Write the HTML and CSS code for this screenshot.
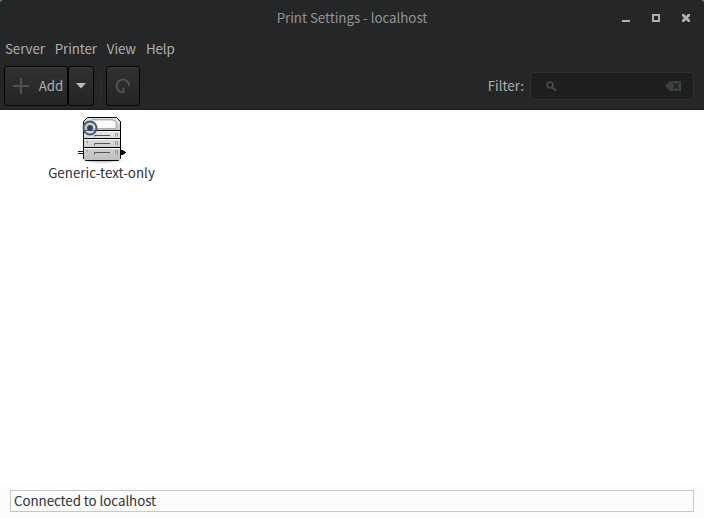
FILE: index.html
```html
<!DOCTYPE html>
<html lang="en">
<head>
<meta charset="utf-8">
<title>Print Settings - localhost</title>
<link rel="stylesheet" href="styles.css">
</head>
<body>
<div class="window">
  <header class="chrome">
    <div class="titlebar">
      <h1 class="title">Print Settings - localhost</h1>
      <div class="controls">
        <svg width="8" height="8"><path d="M0 6h8v2H0z"/></svg>
        <svg width="8" height="8"><path fill-rule="evenodd" d="M0 0h8v8H0zM2 2v4h4V2z"/></svg>
        <svg width="8" height="8"><path d="M0 0h2l2 2 2-2h2v2L6 4l2 2v2H6L4 6 2 8H0V6l2-2-2-2z"/></svg>
      </div>
    </div>
    <nav class="menu"><span>Server</span><span>Printer</span><span>View</span><span>Help</span></nav>
    <div class="toolbar">
      <button class="btn add"><svg width="16" height="16"><path d="M7 0h2v7h7v2H9v7H7V9H0V7h7z"/></svg><span>Add</span></button>
      <button class="btn drop"><svg width="10" height="6"><path d="M0 0h10L5 5.5z"/></svg></button>
      <i class="separator"></i>
      <button class="btn refresh"><svg width="16" height="16"><path d="M4.500 13.200A6.300 6.300 0 1 1 14.300 8M4 14h4.500V9.500" fill="none" stroke="#505152" stroke-width="2"/></svg></button>
      <span class="filter-label">Filter:</span>
      <div class="search">
        <svg width="11" height="11"><circle cx="4" cy="4" r="3" fill="none" stroke="#4b4c4c" stroke-width="1.7"/><path d="M6.3 6.3l3.5 3.5" stroke="#4b4c4c" stroke-width="2"/></svg>
        <svg width="16" height="10"><path d="M0 5l5-5h11v10H5z" fill="#3e4040"/><path d="M8.3 2.3l5.4 5.4m0-5.4L8.3 7.7" stroke="#1d1f20" stroke-width="1.6"/></svg>
      </div>
    </div>
  </header>
  <main class="content">
    <div class="printer">
      <svg class="printer-icon" width="48" height="48" viewBox="0 0 48 48">
        <defs>
          <linearGradient id="tray" x2="0" y2="1"><stop stop-color="#e6e6e4"/><stop offset="1" stop-color="#bfc0bd"/></linearGradient>
          <radialGradient id="shade"><stop stop-color="#000" stop-opacity=".4"/><stop offset="1" stop-color="#000" stop-opacity="0"/></radialGradient>
        </defs>
        <ellipse cx="24" cy="43.500" rx="23" ry="4.500" fill="url(#shade)"/>
        <path d="M0 35.500h6M0 37.500h6M42 35.500h5M42 37.500h5" stroke="#111" fill="none"/>
        <path d="M43 34h2l1 1v3l-1 1h-2zM46 36h2v1h-2z"/>
        <path d="M9.500 1.500h29l4 4v37l-2 2h-33l-2-2v-37z" fill="#d9dad7" stroke="#000"/>
        <path d="M10 2h28l4 4v8H6V6z" fill="url(#tray)"/>
        <path d="M16 5h22v7H16z" fill="#fafaf9"/>
        <path d="M14 3.500h20l4 2v7H20" fill="none" stroke="#aaa"/>
        <path d="M6 15h36v7H6zm0 8h36v8H6zm0 9h36v12H6z" fill="url(#tray)"/>
        <path d="M5 14.500h38M5 22.500h38M5 31.500h38" stroke="#000"/>
        <path d="M6 15.500h36M6 23.500h36M6 32.500h36" stroke="#f5f5f5"/>
        <path d="M16.500 20.500v-1H32M16.500 29.500v-2H32M16.500 38.500v-2H32" fill="none" stroke="#555"/>
        <path d="M37.500 20.500v-3h2v3M37.500 29.500v-4h2v4M37.500 38.500v-4h2v4M8 25.500h1.500v2M8 34.500h1.500v2" fill="none" stroke="#999"/>
        <circle cx="12" cy="12" r="6.500" fill="#c3cad0" fill-opacity=".5" stroke="#425b73" stroke-width="2"/>
        <circle cx="12" cy="12" r="2.900" fill="#2b465f"/>
      </svg>
      <span class="printer-name">Generic-text-only</span>
    </div>
  </main>
  <footer class="statusbar"><div class="status">Connected to localhost</div></footer>
</div>
</body>
</html>
```
FILE: styles.css
```css
* { box-sizing: border-box; }
body {
  margin: 0;
  background: #5d7376;
  font: 13.33px/20px "Noto Sans CJK SC", sans-serif;
  color: #303030;
}
svg { display: block; flex: none; }
.window {
  height: 518px;
  display: flex;
  flex-direction: column;
  background: #fff;
  border-radius: 3px 3px 0 0;
  overflow: hidden;
}
.chrome {
  height: 110px;
  background: #252628;
  border-bottom: 1px solid #1f2022;
  color: #afb0b0;
}
.titlebar {
  height: 36px;
  display: grid;
  grid-template-columns: 1fr auto 1fr;
  align-items: center;
  color: #949595;
}
.title { grid-column: 2; margin: 0; font: inherit; letter-spacing: -0.03px; }
.controls {
  display: flex;
  justify-content: flex-end;
  gap: 22px;
  padding-right: 14px;
  fill: #b0b1b1;
}
.menu { display: flex; gap: 10px; height: 30px; padding: 3px 5px; letter-spacing: -0.1px; }
.toolbar { display: flex; align-items: center; height: 40px; padding: 0 10px 0 4px; }
.btn {
  display: flex;
  align-items: center;
  justify-content: center;
  height: 40px;
  margin: 0;
  padding: 0;
  border: 1px solid #040405;
  border-radius: 3px;
  background: linear-gradient(#303133, #232426);
  box-shadow: inset 0 1px #38393b;
  color: inherit;
  font: inherit;
}
.add { width: 64px; gap: 10px; padding-left: 4px; fill: #505152; }
.drop { width: 26px; fill: #b8b9b9; }
.separator { width: 1px; height: 26px; margin: 0 5px 0 6px; background: #303133; }
.refresh { width: 34px; margin-right: auto; }
.search {
  display: flex;
  align-items: center;
  justify-content: space-between;
  width: 164px;
  height: 28px;
  margin-left: 6px;
  padding: 0 12px 0 15px;
  border: 1px solid #2d2f30;
  border-radius: 3px;
  background: #1d1f20;
}
.content { flex: 1; padding: 6px 0 0 48px; }
.printer { display: flex; flex-direction: column; align-items: center; width: 107px; white-space: nowrap; }
.printer-name { margin-top: -1px; letter-spacing: 0.03px; }
.statusbar { height: 34px; padding: 6px 10px; background: #fcfcfc; }
.status { height: 22px; padding-left: 3px; border: 1px solid #c8c8c8; letter-spacing: -0.05px; }
```
